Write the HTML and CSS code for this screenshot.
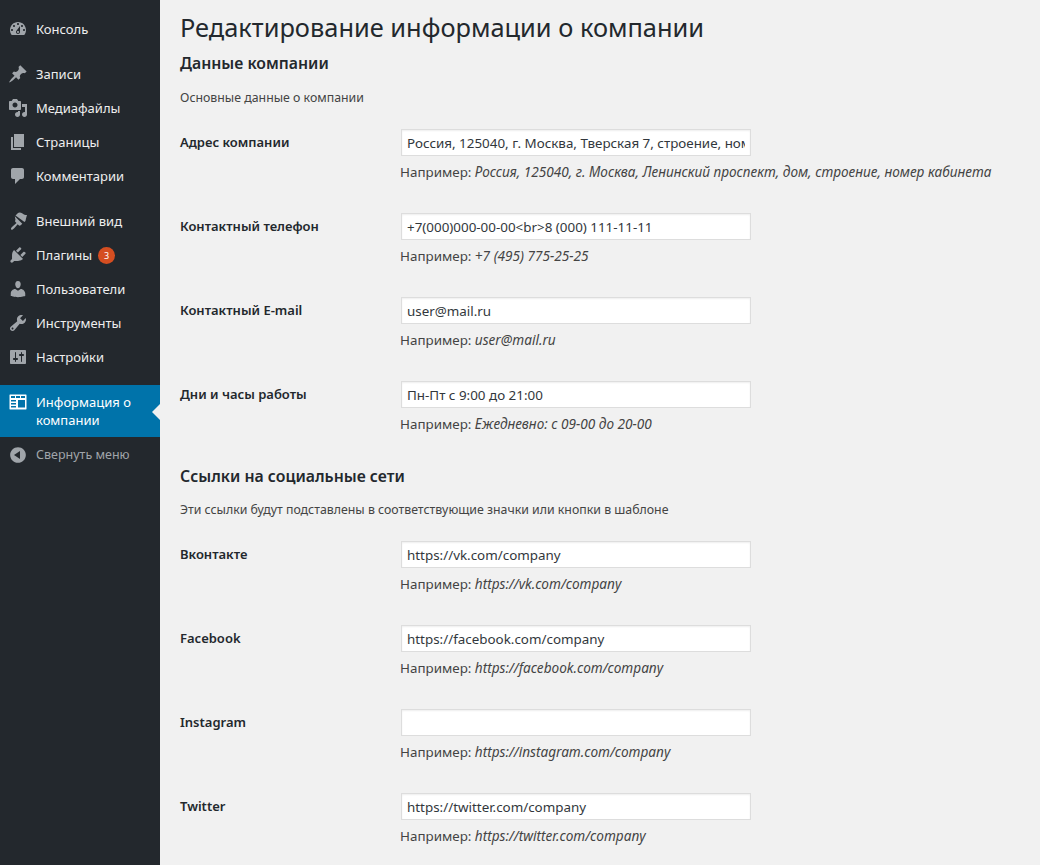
FILE: index.html
```html
<!DOCTYPE html>
<html lang="ru">
<head>
<meta charset="utf-8">
<title>Редактирование информации о компании</title>
<link rel="stylesheet" href="styles.css">
</head>
<body>
<div class="layout">
<nav class="side">
  <ul class="menu">
    <li class="item"><svg viewBox="0 0 20 20"><path d="M3.76 16h12.48c1.100-1.370 1.760-3.110 1.760-5 0-4.420-3.580-8-8-8s-8 3.580-8 8c0 1.890.66 3.630 1.760 5zM10 4c.55 0 1 .45 1 1s-.45 1-1 1-1-.45-1-1 .45-1 1-1zM6 6c.55 0 1 .45 1 1s-.45 1-1 1-1-.45-1-1 .45-1 1-1zm8 0c.55 0 1 .45 1 1s-.45 1-1 1-1-.45-1-1 .45-1 1-1zm-5.370 5.550L12 7v6c0 1.100-.9 2-2 2s-2-.9-2-2c0-.57.24-1.080.63-1.450zM4 10c.55 0 1 .45 1 1s-.45 1-1 1-1-.45-1-1 .45-1 1-1zm12 0c.55 0 1 .45 1 1s-.45 1-1 1-1-.45-1-1 .45-1 1-1zm-5 3c0-.55-.45-1-1-1s-1 .45-1 1 .45 1 1 1 1-.45 1-1z" fill-rule="evenodd"/></svg><span>Консоль</span></li>
    <li class="item gap"><svg viewBox="0 0 20 20"><path d="M10.440 3.020l1.820-1.820 6.360 6.350-1.830 1.820c-1.050-.68-2.480-.57-3.410.36l-.75.75c-.92.930-1.040 2.350-.35 3.410l-1.830 1.820-2.410-2.410-2.800 2.790c-.42.420-3.380 2.710-3.800 2.290s1.860-3.390 2.280-3.810l2.790-2.790L4.100 9.360l1.830-1.820c1.050.69 2.480.57 3.400-.36l.75-.75c.93-.92 1.050-2.350.36-3.410z"/></svg><span>Записи</span></li>
    <li class="item"><svg viewBox="0 0 20 20"><path fill-rule="evenodd" d="M13 11V4c0-.55-.45-1-1-1h-1.670L9 1H5L3.670 3H2c-.55 0-1 .45-1 1v7c0 .55.45 1 1 1h10c.55 0 1-.45 1-1zM7 4.500c1.380 0 2.500 1.120 2.500 2.500S8.380 9.500 7 9.500 4.500 8.380 4.500 7 5.620 4.500 7 4.500zM14 6h5v10.500c0 1.380-1.120 2.500-2.500 2.500S14 17.880 14 16.500s1.120-2.500 2.500-2.500c.17 0 .34.020.5.050V9h-3V6zm-4 8.050V13h2v3.500c0 1.380-1.120 2.500-2.500 2.500S7 17.880 7 16.500 8.120 14 9.500 14c.17 0 .34.020.5.050z"/></svg><span>Медиафайлы</span></li>
    <li class="item"><svg viewBox="0 0 20 20"><path d="M6 15V2h10v13H6zm-1 1h8v2H3V5h2v11z"/></svg><span>Страницы</span></li>
    <li class="item"><svg viewBox="0 0 20 20"><path d="M5 2h9c1.100 0 2 .9 2 2v7c0 1.100-.9 2-2 2h-2l-5 5v-5H5c-1.100 0-2-.9-2-2V4c0-1.100.9-2 2-2z"/></svg><span>Комментарии</span></li>
    <li class="item gap"><svg viewBox="0 0 20 20"><path d="M7.500 4.500L10 2c1-1 3-.5 4.500.5 1.500 1 2.500 1.500 4.500 1.500-.5 2-1 3-1.200 4.500-.1 1-.5 2-1.300 2.500zM6.800 5.200l7.500 7.500-1.600 1.600c-.6.6-1.500.6-2 0l-1-1-3.500 4c-.9 1-2.300 2-3 1.300s.3-2.100 1.300-3l4-3.500-1-1c-.6-.5-.6-1.400 0-2z"/></svg><span>Внешний вид</span></li>
    <li class="item"><svg viewBox="0 0 20 20"><path d="M13.110 4.360L9.870 7.600 8 5.730l3.240-3.240c.35-.34 1.050-.2 1.560.32.52.510.66 1.210.31 1.550zm-8 1.770l.91-1.120 9.010 9.010-1.190.84c-.71.710-2.630 1.160-3.820 1.160H6.140L4.900 17.260c-.59.590-1.540.59-2.120 0-.59-.58-.59-1.530 0-2.120l1.240-1.240v-3.880c0-1.130.4-3.190 1.090-3.890zm7.260 3.970l3.240-3.240c.34-.35 1.040-.21 1.550.31.520.510.66 1.210.31 1.550l-3.240 3.250z"/></svg><span>Плагины</span><b class="badge">3</b></li>
    <li class="item"><svg viewBox="0 0 20 20"><path d="M10 9.250c-2.270 0-2.730-3.440-2.730-3.440C7 4.020 7.820 2 9.970 2c2.160 0 2.980 2.020 2.710 3.810 0 0-.41 3.440-2.680 3.440zm0 2.570L12.720 10c2.390 0 4.520 2.330 4.520 4.530v2.490s-3.650 1.130-7.240 1.130c-3.650 0-7.240-1.130-7.240-1.130v-2.490c0-2.250 1.940-4.480 4.470-4.480z"/></svg><span>Пользователи</span></li>
    <li class="item"><svg viewBox="0 0 20 20"><path fill-rule="evenodd" d="M16.680 9.770c-1.340 1.340-3.300 1.670-4.950.99l-5.410 6.520c-.99.990-2.590.99-3.580 0s-.99-2.590 0-3.570l6.520-5.420c-.68-1.650-.35-3.610.99-4.950 1.280-1.280 3.120-1.620 4.720-1.060l-2.890 2.890 2.820 2.820 2.860-2.870c.53 1.580.18 3.400-1.080 4.650zM3.810 16.210c.4.390 1.040.39 1.430 0 .4-.4.4-1.040 0-1.430-.39-.4-1.030-.4-1.430 0-.39.39-.39 1.030 0 1.430z"/></svg><span>Инструменты</span></li>
    <li class="item"><svg viewBox="0 0 20 20"><path fill-rule="evenodd" d="M18 16V4c0-.55-.45-1-1-1H3c-.55 0-1 .45-1 1v12c0 .55.45 1 1 1h14c.55 0 1-.45 1-1zM8 11h1c.55 0 1 .45 1 1s-.45 1-1 1H8v1.500c0 .28-.22.5-.5.5s-.5-.22-.5-.5V13H6c-.55 0-1-.45-1-1s.45-1 1-1h1V5.500c0-.28.22-.5.5-.5s.5.22.5.5V11zm5-2h-1c-.55 0-1-.45-1-1s.45-1 1-1h1V5.500c0-.28.22-.5.5-.5s.5.22.5.5V7h1c.55 0 1 .45 1 1s-.45 1-1 1h-1v5.500c0 .28-.22.5-.5.5s-.5-.22-.5-.5V9z"/></svg><span>Настройки</span></li>
    <li class="item gap current"><svg viewBox="0 0 20 20"><path fill-rule="evenodd" d="M2 2.500h16c.3 0 .5.2.5.5v14c0 .3-.2.5-.5.5H2c-.3 0-.5-.2-.5-.5V3c0-.3.2-.5.5-.5zM3 4h4v2H3zm5 0h4v2H8zm5 0h4v2h-4zM3 8h5v1.500H3zm0 3h5v1.500H3zm0 3h5v1.500H3zm7-6h7v7.500h-7z"/></svg><span>Информация о компании</span></li>
    <li class="item collapse"><svg viewBox="0 0 20 20"><path fill-rule="evenodd" d="M10 2.160c4.330 0 7.840 3.510 7.840 7.840S14.330 17.840 10 17.840 2.160 14.330 2.160 10 5.670 2.160 10 2.160zM12 14V6l-6 4z"/></svg><span>Свернуть меню</span></li>
  </ul>
</nav>
<main class="content">
  <h1>Редактирование информации о компании</h1>
  <h2>Данные компании</h2>
  <p class="intro">Основные данные о компании</p>
  <div class="row"><label>Адрес компании</label><div class="field"><input type="text" value="Россия, 125040, г. Москва, Тверская 7, строение, номер кабинета"><p>Например: <em>Россия, 125040, г. Москва, Ленинский проспект, дом, строение, номер кабинета</em></p></div></div>
  <div class="row"><label>Контактный телефон</label><div class="field"><input type="text" value="+7(000)000-00-00&lt;br&gt;8 (000) 111-11-11"><p>Например: <em>+7 (495) 775-25-25</em></p></div></div>
  <div class="row"><label>Контактный E-mail</label><div class="field"><input type="text" value="user@mail.ru"><p>Например: <em>user@mail.ru</em></p></div></div>
  <div class="row"><label>Дни и часы работы</label><div class="field"><input type="text" value="Пн-Пт с 9:00 до 21:00"><p>Например: <em>Ежедневно: с 09-00 до 20-00</em></p></div></div>
  <h2 class="second">Ссылки на социальные сети</h2>
  <p class="intro social">Эти ссылки будут подставлены в соответствующие значки или кнопки в шаблоне</p>
  <div class="row"><label>Вконтакте</label><div class="field"><input type="text" value="https://vk.com/company"><p>Например: <em>https://vk.com/company</em></p></div></div>
  <div class="row"><label>Facebook</label><div class="field"><input type="text" value="https://facebook.com/company"><p>Например: <em>https://facebook.com/company</em></p></div></div>
  <div class="row"><label>Instagram</label><div class="field"><input type="text" value=""><p>Например: <em>https://instagram.com/company</em></p></div></div>
  <div class="row"><label>Twitter</label><div class="field"><input type="text" value="https://twitter.com/company"><p>Например: <em>https://twitter.com/company</em></p></div></div>
</main>
</div>
</body>
</html>
```
FILE: styles.css
```css
html, body { margin: 0; padding: 0; height: 865px; overflow: hidden; }
body { background: #f1f1f1; color: #444; font-family: "Noto Sans", sans-serif; font-size: 13px; line-height: 19px; }
.layout { display: flex; height: 865px; }
.side { width: 160px; flex: none; background: #23282d; }
.menu { list-style: none; margin: 0; padding: 12px 0 0; }
.item { position: relative; display: flex; align-items: flex-start; height: 34px; box-sizing: border-box; padding: 8px; color: #eee; font-size: 13px; line-height: 18px; }
.item svg { width: 20px; height: 20px; flex: none; margin: -1px 8px 0 0; fill: #a0a5aa; }
.item.gap { margin-top: 11px; }
.current { background: #0073aa; color: #fff; height: 52px; padding-right: 20px; }
.current svg { fill: #fff; }
.current::after { content: ""; position: absolute; right: 0; top: 19px; border: 8px solid transparent; border-right-color: #f1f1f1; }
.collapse { color: #a0a5aa; font-size: 12.5px; padding-top: 9px; }
.badge { display: inline-block; width: 17px; height: 17px; margin: 1px 0 0 6px; border-radius: 50%; background: #d54e21; color: #fff; font-size: 9px; font-weight: 400; line-height: 17px; text-align: center; }
.content { flex: 1; padding: 0 20px; min-width: 0; }
h1 { margin: 0; padding: 13px 0 0; font-size: 25.4px; line-height: 29px; font-weight: 400; color: #23282d; }
h2 { margin: 0; padding: 9px 0 0; font-size: 15.8px; line-height: 24px; font-weight: 600; color: #23282d; }
h2.second { padding-top: 13px; }
.intro { margin: 0 0 8px; padding: 13px 0 0; font-size: 12.33px; line-height: 19px; }
.intro.social { margin-bottom: 8px; padding-top: 12px; }
.row { display: flex; height: 84px; padding-top: 14px; box-sizing: border-box; }
.row label { width: 221px; flex: none; padding-top: 4px; font-size: 13px; font-weight: 600; color: #23282d; }
.field input { display: block; width: 350px; height: 27px; box-sizing: border-box; padding: 0 5px; margin: 0; border: 1px solid #ddd; background: #fff; color: #32373c; font: 13.4px "Noto Sans", sans-serif; box-shadow: inset 0 1px 2px rgba(0,0,0,.07); outline: 0; border-radius: 0; }
.field p { margin: 6px 0 0 -1px; font-size: 13.4px; line-height: 19px; white-space: nowrap; }
.field em { font-size: 13.6px; }
```
